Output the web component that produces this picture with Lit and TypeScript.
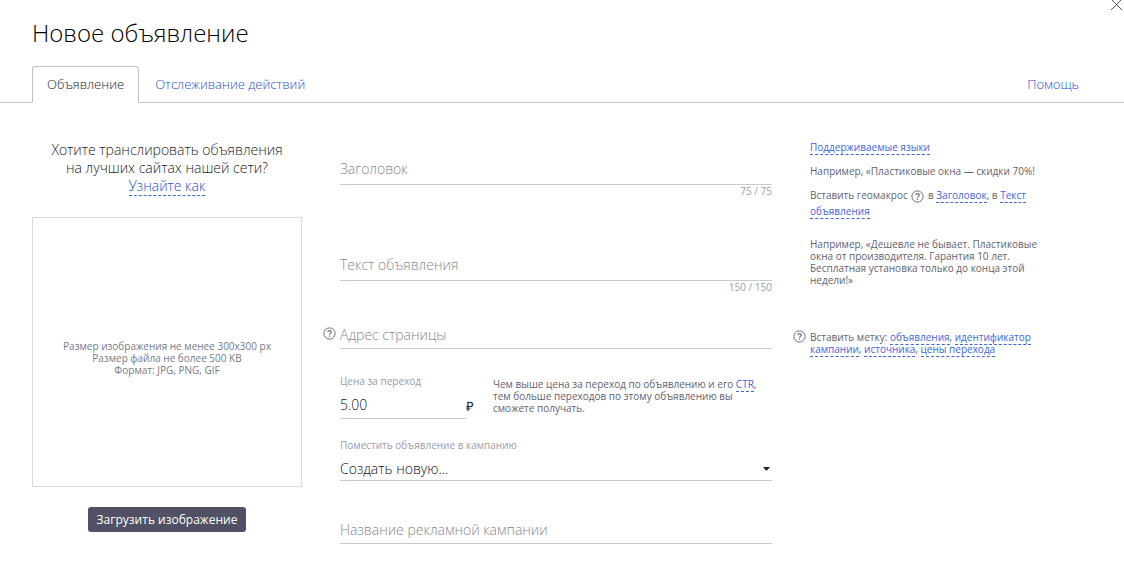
import { LitElement, html, css, svg } from "lit";
import { customElement, property, state } from "lit/decorators.js";

@customElement("help-icon")
class HelpIcon extends LitElement {
  static styles = css`
    :host { display: inline-block; width: 13px; height: 13px; color: #686b78; }
    .glyph { display: block; width: 100%; height: 100%; }
  `;
  render() {
    return html`<svg class="glyph" viewBox="0 0 13 13" fill="none" stroke="currentColor" role="img" aria-label="Справка">
      ${svg`<circle cx="6.5" cy="6.5" r="5.6"/>
      <path d="M4.8 5.1C4.8 3.2 8.3 3.2 8.3 5.1C8.3 6.2 6.5 6.2 6.5 7.6" stroke-width="1.2"/>
      <path d="M6.5 8.5V9.8" stroke-width="1.3"/>`}
    </svg>`;
  }
}

@customElement("text-field")
class TextField extends LitElement {
  @property() label = "";
  @property({ type: Number }) limit = 0;
  @state() private value = "";

  static styles = css`
    :host { display: block; }
    .input {
      display: block; box-sizing: border-box; width: 100%; height: 28px;
      padding: 0; border: 0; border-bottom: 1px solid #c9cbd2; border-radius: 0;
      background: none; outline: none; color: #22232a;
      font: 300 14px/20px "Open Sans", sans-serif;
    }
    .tall { height: 32px; }
    .input::placeholder { color: #858793; opacity: 1; }
    .input:focus { border-color: #4a6fdc; }
    .counter { color: #9a9ca8; font-size: 10px; line-height: 12px; text-align: right; }
  `;
  render() {
    return html`
      <input class="input ${this.limit ? "tall" : ""}" aria-label=${this.label} placeholder=${this.label}
        .value=${this.value} @input=${(e: Event) => (this.value = (e.target as HTMLInputElement).value)}>
      ${this.limit ? html`<div class="counter">${this.limit - this.value.length} / ${this.limit}</div>` : null}
    `;
  }
}

@customElement("app-root")
class AppRoot extends LitElement {
  static styles = css`
    :host {
      display: block; min-height: 100vh; box-sizing: border-box; background: #fff;
      font-family: "Open Sans", sans-serif; font-size: 14px; color: #22232a;
    }
    a { color: #3c66dc; text-decoration: none; }
    .dashed { border-bottom: 1px dashed #3c66dc; }
    .close {
      position: absolute; top: -2px; right: 1px; padding: 0; border: 0;
      background: none; color: #555; width: 13px; height: 13px;
    }
    .close-glyph { display: block; }
    .title {
      margin: 0; padding: 16px 32px 0; color: #000;
      font-size: 24px; line-height: 34px; font-weight: 300;
    }
    .tabs {
      display: flex; align-items: flex-end; padding: 0 45px 0 32px; margin-top: 16px;
      border-bottom: 1px solid #c2c2c6; font-size: 13px; line-height: 35px; font-weight: 300;
    }
    .tabs a { color: #2450d0; }
    .tab { padding: 0 16px; }
    .tabs .active {
      padding: 0 14px; margin-bottom: -1px; color: #22232a; background: #fff;
      border: 1px solid #c2c2c6; border-bottom-color: #fff; border-radius: 3px 3px 0 0;
    }
    .help { margin-left: auto; }
    .body {
      display: grid; grid-template-columns: 270px minmax(0, 1fr); gap: 38px;
      padding: 38px 74px 16px 32px;
    }
    .side { display: flex; flex-direction: column; align-items: center; }
    .promo { margin: 0; font-weight: 300; line-height: 18px; text-align: center; }
    .promo .dashed { display: inline-block; color: #2450d0; }
    .drop {
      display: grid; place-items: center; box-sizing: border-box; width: 100%; aspect-ratio: 1;
      margin-top: 21px; padding-top: 12px; border: 1px solid #d8d9dd; color: #777a89;
      font-size: 10px; line-height: 12px; text-align: center;
    }
    .upload {
      margin-top: 20px; padding: 0 9px; border: 0; border-radius: 3px;
      background: #505164; color: #fff; font: 12px/25px "Open Sans", sans-serif;
    }
    .row { display: grid; grid-template-columns: minmax(0, 1fr) 240px; column-gap: 38px; }
    .row + .row { margin-top: 28px; }
    .row + .copy-row { margin-top: 19px; }
    .row + .price-block { margin-top: 20px; }
    .control { position: relative; }
    .marker { position: absolute; left: -17px; top: 6px; }
    .headline { padding-top: 12px; }
    .copy { padding-top: 11px; }
    .hints { color: #5f6270; font-size: 10px; line-height: 12px; }
    .hints p { margin: 0; }
    .hints p + p { margin-top: 12px; }
    .hints p + .macro { margin-top: 10px; line-height: 16px; }
    .macro help-icon { margin: 0 1px; vertical-align: middle; }
    .address { position: relative; padding-top: 10px; }
    .address .marker { top: 9px; }
    .price-row { display: grid; grid-template-columns: 134px minmax(0, 1fr); column-gap: 19px; }
    .price-row .hints { padding-top: 3px; }
    .label { display: block; color: #9a9ca8; font-size: 10px; line-height: 12px; }
    .price { display: flex; align-items: center; margin-top: 4px; }
    .value {
      box-sizing: border-box; flex: 1; min-width: 0; width: 100%; height: 28px; padding: 0; border: 0;
      border-bottom: 1px solid #c9cbd2; border-radius: 0; background: none; color: #111217;
      font: 300 14px/20px "Open Sans", sans-serif;
    }
    .select-wrap { display: grid; align-items: center; margin-top: 2px; }
    .select-wrap > * { grid-area: 1 / 1; }
    .select { appearance: none; padding-top: 5px; }
    .arrow { justify-self: end; margin: 4px 2px 0 0; pointer-events: none; }
    .ruble { padding-top: 2px; font-size: 13px; line-height: 12px; }
    .campaign { margin-top: 20px; }
    .name { margin-top: 35px; }
  `;

  private link(text: string) {
    return html`<a class="dashed" href="#">${text}</a>`;
  }

  render() {
    return html`
      <button class="close" aria-label="Закрыть">
        <svg class="close-glyph" width="13" height="13" viewBox="0 0 13 13" fill="none" stroke="currentColor">
          <path d="M1 1L12 12M12 1L1 12"/>
        </svg>
      </button>
      <h1 class="title">Новое объявление</h1>
      <nav class="tabs">
        <a class="tab active" href="#" aria-current="page">Объявление</a>
        <a class="tab" href="#">Отслеживание действий</a>
        <a class="help" href="#">Помощь</a>
      </nav>
      <main class="body">
        <section class="side">
          <p class="promo">Хотите транслировать объявления<br>на лучших сайтах нашей сети?<br>${this.link("Узнайте как")}</p>
          <div class="drop"><div>Размер изображения не менее 300x300 px<br>Размер файла не более 500 KB<br>Формат: JPG, PNG, GIF</div></div>
          <button class="upload">Загрузить изображение</button>
        </section>
        <form>
          <div class="row">
            <text-field class="headline" label="Заголовок" limit="75"></text-field>
            <div class="hints">
              <p>${this.link("Поддерживаемые языки")}</p>
              <p>Например, «Пластиковые окна — скидки 70%!</p>
              <p class="macro">Вставить геомакрос <help-icon></help-icon> в ${this.link("Заголовок")}, в ${this.link("Текст объявления")}</p>
            </div>
          </div>
          <div class="row copy-row">
            <text-field class="copy" label="Текст объявления" limit="150"></text-field>
            <div class="hints">
              <p>Например, «Дешевле не бывает. Пластиковые окна от производителя. Гарантия 10 лет. Бесплатная установка только до конца этой недели!»</p>
            </div>
          </div>
          <div class="row">
            <div class="control">
              <help-icon class="marker"></help-icon>
              <text-field label="Адрес страницы"></text-field>
            </div>
            <div class="hints address">
              <help-icon class="marker"></help-icon>
              Вставить метку: ${this.link("объявления")}, ${this.link("идентификатор")} ${this.link("кампании")}, ${this.link("источника")}, ${this.link("цены перехода")}
            </div>
          </div>
          <div class="row price-block">
            <div>
              <div class="price-row">
                <div>
                  <label class="label" for="price">Цена за переход</label>
                  <div class="price"><input class="value" id="price" value="5.00"><span class="ruble">₽</span></div>
                </div>
                <div class="hints">Чем выше цена за переход по объявлению и его ${this.link("CTR")}, тем больше переходов по этому объявлению вы сможете получать.</div>
              </div>
              <div class="campaign">
                <label class="label" for="campaign">Поместить объявление в кампанию</label>
                <div class="select-wrap">
                  <select class="value select" id="campaign"><option>Создать новую...</option></select>
                  <svg class="arrow" width="7" height="4" viewBox="0 0 7 4"><path d="M0 0H7L3.5 4Z" fill="#222"/></svg>
                </div>
              </div>
              <text-field class="name" label="Название рекламной кампании"></text-field>
            </div>
          </div>
        </form>
      </main>
    `;
  }
}
